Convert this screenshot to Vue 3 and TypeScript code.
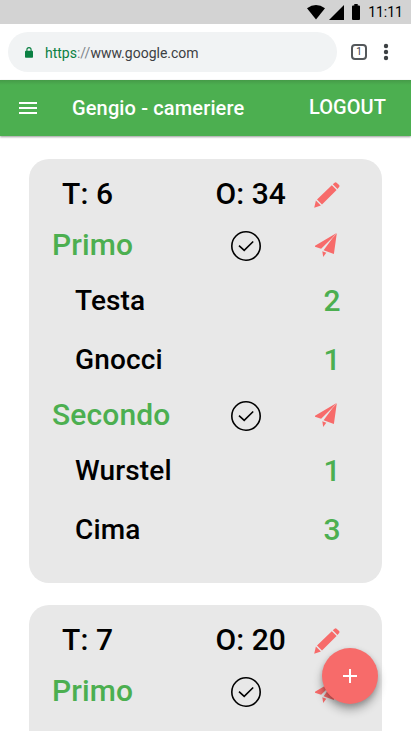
<script setup lang="ts">
interface Dish {
  name: string
  quantity: number
}

interface Course {
  title: string
  dishes: Dish[]
}

interface Order {
  table: number
  number: number
  courses: Course[]
}

const orders: Order[] = [
  {
    table: 6,
    number: 34,
    courses: [
      { title: 'Primo', dishes: [{ name: 'Testa', quantity: 2 }, { name: 'Gnocci', quantity: 1 }] },
      { title: 'Secondo', dishes: [{ name: 'Wurstel', quantity: 1 }, { name: 'Cima', quantity: 3 }] },
    ],
  },
  { table: 7, number: 20, courses: [{ title: 'Primo', dishes: [] }] },
]
</script>

<template>
  <div class="screen">
    <div class="status">
      <svg class="wifi" viewBox="0 0 18 15"><path d="M0 3.2Q9-3 18 3.2L9 14.5Z" /></svg>
      <svg class="signal" viewBox="0 0 15 15"><path d="M15 0V15H0Z" /></svg>
      <svg class="battery" viewBox="0 0 8 16"><path d="M2.3 0h3.4v1.5H7q1 0 1 1V15q0 1-1 1H1q-1 0-1-1V2.5q0-1 1-1h1.3Z" /></svg>
      <span class="clock">11:11</span>
    </div>

    <div class="browser">
      <div class="address">
        <svg class="lock" viewBox="0 0 8 11"><path d="M1.9 4V2.7a2.1 2.1 0 0 1 4.2 0V4" fill="none" stroke="#0b8043" stroke-width="1.1" /><rect y="3.7" width="8" height="7.1" rx=".8" fill="#0b8043" /></svg>
        <span class="url"><span class="scheme">https</span><span class="slashes">://</span>www.google.com</span>
      </div>
      <span class="tabs">1</span>
      <svg class="more" viewBox="0 0 6 18"><circle cx="3" cy="3" r="2.2" /><circle cx="3" cy="9" r="2.2" /><circle cx="3" cy="15" r="2.2" /></svg>
    </div>

    <header class="appbar">
      <svg class="menu" viewBox="0 0 18 12"><path d="M0 0h18v2H0zM0 5h18v2H0zM0 10h18v2H0z" /></svg>
      <h1 class="title">Gengio - cameriere</h1>
      <span class="logout">LOGOUT</span>
    </header>

    <main class="orders">
      <section v-for="order in orders" :key="order.number" class="card">
        <div class="row head">
          <span class="table">T: {{ order.table }}</span>
          <span class="number">O: {{ order.number }}</span>
          <svg class="pencil" viewBox="0 0 26 26"><path d="M18.8 2.3 20.6 .7Q21.6 -.1 22.6 .7L25.1 3.1Q25.9 4.1 25.1 5.1L23.5 6.9ZM17.8 3.2 22.6 8 8 22.4 3 17.4ZM1.9 18.6 6.9 23.5 .2 25.7Z" /></svg>
        </div>
        <template v-for="course in order.courses" :key="course.title">
          <div class="row course">
            <span class="course-title">{{ course.title }}</span>
            <svg class="check" viewBox="0 0 30 30"><circle cx="15" cy="15" r="14.2" /><path d="M8 14.6 13.2 19.4 22.2 10.5" /></svg>
            <svg class="plane" viewBox="0 0 22 24"><path d="M21.6 0 0 12.7V13.8L6.1 15.8 17.1 4.9ZM21.8 .2 18.9 21 8.6 17.3 17.2 5.5ZM7.3 18.2 11.3 19.7 8.2 24Z" /></svg>
          </div>
          <div v-for="dish in course.dishes" :key="dish.name" class="row dish">
            <span class="name">{{ dish.name }}</span>
            <span class="quantity">{{ dish.quantity }}</span>
          </div>
        </template>
      </section>
    </main>

    <button class="fab" aria-label="+"><svg viewBox="0 0 14 14"><path d="M6 0h2v6h6v2H8v6H6V8H0V6h6Z" /></svg></button>
  </div>
</template>

<style>
body {
  margin: 0;
  overflow: hidden;
}
</style>

<style scoped>
.screen {
  position: relative;
  display: flex;
  flex-direction: column;
  width: 411px;
  height: 731px;
  overflow: hidden;
  background: #fff;
  color: #000;
  font-family: Roboto, sans-serif;
}
svg {
  display: block;
  flex: none;
}
.status {
  display: flex;
  flex: none;
  align-items: center;
  justify-content: flex-end;
  height: 24px;
  padding-right: 8px;
  box-sizing: border-box;
  background: #d3d3d3;
}
.wifi { width: 18px; height: 15px; margin-right: 4px; }
.signal { width: 15px; height: 15px; margin-right: 8px; }
.battery { width: 8px; height: 16px; margin-right: 8px; }
.clock { font-size: 14px; line-height: 24px; }
.browser {
  display: flex;
  flex: none;
  align-items: center;
  height: 56px;
  padding: 0 22px 0 8px;
  box-sizing: border-box;
}
.address {
  display: flex;
  align-items: center;
  width: 329px;
  height: 40px;
  padding-left: 17px;
  box-sizing: border-box;
  border-radius: 20px;
  background: #f1f3f4;
}
.lock { width: 8px; height: 11px; margin-right: 12px; }
.url { font-size: 14px; line-height: 20px; color: #3c4043; padding-top: 2px; }
.scheme { color: #0b8043; }
.slashes { color: #80868b; }
.tabs {
  width: 16px;
  height: 16px;
  margin-left: 14px;
  box-sizing: border-box;
  border: 2px solid #54585b;
  border-radius: 4px;
  color: #3c4043;
  font-size: 10px;
  line-height: 12px;
  text-align: center;
}
.more { width: 6px; height: 18px; margin-left: 16px; fill: #3c4043; }
.appbar {
  display: flex;
  flex: none;
  align-items: center;
  height: 56px;
  padding: 0 25px 0 19px;
  box-sizing: border-box;
  background: linear-gradient(#459b48, #4caf50 5px);
  box-shadow: 0 1px 2px rgba(0, 0, 0, 0.4);
  color: #fff;
}
.menu { width: 18px; height: 12px; fill: #fff; }
.title {
  margin: 0 auto 0 35px;
  font-size: 20px;
  font-weight: 500;
  line-height: 24px;
  letter-spacing: 0.14px;
}
.logout {
  padding-bottom: 2px;
  font-size: 20px;
  font-weight: 500;
  line-height: 24px;
  letter-spacing: 0.05px;
}
.orders {
  display: flex;
  flex-direction: column;
  gap: 22px;
  padding: 23px 29px 0;
}
.card {
  flex: none;
  height: 424px;
  padding: 10px 0;
  box-sizing: border-box;
  border-radius: 20px;
  background: #e8e8e8;
  font-size: 30px;
  font-weight: 500;
  letter-spacing: 0.14px;
}
.row {
  display: grid;
  grid-template-columns: 153px 102px 1fr;
  align-items: center;
  height: 50px;
  padding-left: 23px;
  box-sizing: border-box;
  line-height: 35px;
}
.head { height: 51px; }
.table { padding: 0 0 2px 10px; }
.number { padding: 0 0 2px 10.5px; white-space: nowrap; letter-spacing: 0.05px; }
.pencil { width: 26px; height: 26px; margin-left: 7px; fill: #f76b6a; }
.course { color: #4caf50; }
.course-title { padding-bottom: 1px; }
.check {
  width: 30px;
  height: 30px;
  margin: 2px 0 0 26px;
  fill: none;
  stroke: #000;
  stroke-width: 1.6;
}
.plane { width: 22px; height: 24px; margin-left: 8px; fill: #f76b6a; }
.dish {
  grid-template-columns: 271px 1fr;
  height: 59px;
  padding-top: 2px;
}
.dish + .course { margin-top: 2px; }
.name { padding-left: 23px; font-size: 28px; }
.quantity { padding-left: 0.5px; color: #4caf50; }
.fab {
  position: absolute;
  right: 33px;
  bottom: 27px;
  display: grid;
  place-items: center;
  width: 56px;
  height: 56px;
  padding: 0;
  border: 0;
  border-radius: 50%;
  background: #f76b6a;
  box-shadow: 0 6px 10px rgba(0, 0, 0, 0.3), 0 2px 5px rgba(0, 0, 0, 0.15);
}
.fab svg { width: 14px; height: 14px; fill: #fff; }
</style>
